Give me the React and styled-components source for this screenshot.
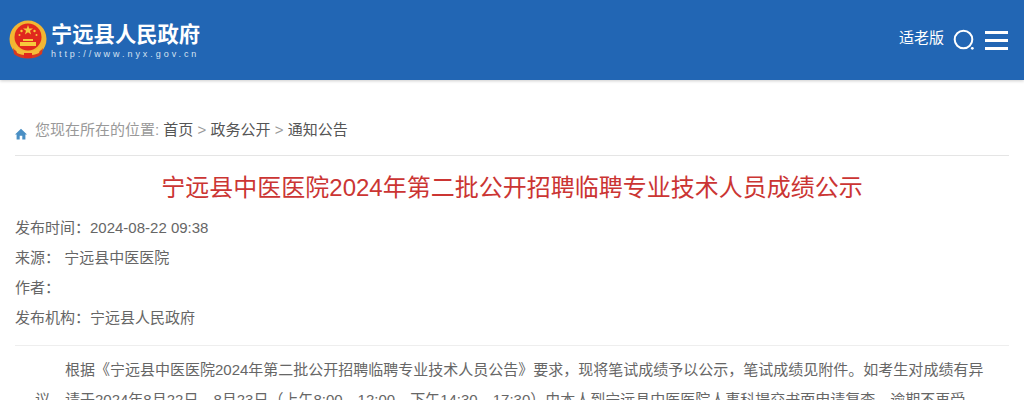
import React from 'react';
import styled, { createGlobalStyle } from 'styled-components';

const Global = createGlobalStyle`
html, body {
    margin: 0;
    padding: 0;
    background: #fff;
    overflow: hidden;
    font-family: "Liberation Sans", "Noto Sans CJK SC", sans-serif;
}
`;

const Page = styled.div`
width: 1024px;
height: 400px;
overflow: hidden;
`;

const Header = styled.header`
height: 80px;
background: #2266b4;
box-shadow: 0 1px 3px rgba(0, 0, 0, .2);
display: flex;
align-items: center;
justify-content: space-between;
padding: 0 16px 0 9px;
box-sizing: border-box;
`;

const Brand = styled.div`
display: flex;
align-items: center;
gap: 4px;
`;

const BrandText = styled.div`
color: #fff;
display: flex;
flex-direction: column;
margin-top: 2px;
`;

const BrandName = styled.div`
font-size: 21.3px;
line-height: 25px;
font-weight: 700;
white-space: nowrap;
`;

const BrandUrl = styled.div`
font-size: 9px;
line-height: 12px;
letter-spacing: 2.95px;
color: #d5e2f2;
white-space: nowrap;
`;

const Tools = styled.div`
display: flex;
align-items: center;
`;

const Elder = styled.span`
color: #fff;
font-size: 15px;
margin-right: 9px;
margin-top: -7px;
`;

const Burger = styled.div`
width: 23px;
height: 19px;
margin-left: 10px;
display: flex;
flex-direction: column;
justify-content: space-between;
span {
    display: block;
    height: 3px;
    background: #fff;
}
`;

const Main = styled.main`
padding: 0 15px;
`;

const Crumbs = styled.div`
height: 76px;
box-sizing: border-box;
padding-top: 40px;
border-bottom: 1px solid #e5e5e5;
display: flex;
align-items: flex-start;
font-size: 15px;
line-height: 20px;
color: #999;
white-space: nowrap;
svg {
    margin: 8px 8px 0 0;
}
a {
    color: #555;
    text-decoration: none;
}
i {
    font-style: normal;
    margin: 0 4.2px;
    color: #999;
}
`;

const Title = styled.h1`
margin: 0;
padding: 17px 0 10px;
font-size: 24px;
line-height: 30px;
font-weight: 400;
text-align: center;
color: #cb3533;
white-space: nowrap;
`;

const Meta = styled.div`
padding-bottom: 12px;
border-bottom: 1px solid #eee;
`;

const MetaRow = styled.div`
font-size: 15px;
line-height: 30px;
height: 30px;
color: #666;
white-space: nowrap;
`;

const Body = styled.div`
padding: 9px 20px 0 20px;
p {
    margin: 0;
    font-size: 15px;
    line-height: 30px;
    color: #666;
    text-indent: 30px;
}
`;

function Emblem() {
  return (
    <svg width="38" height="40" viewBox="0 0 38 40">
      <circle cx="19" cy="19" r="18.5" fill="#f2b632" />
      <circle cx="19" cy="17" r="13.5" fill="#e0281e" />
      <polygon points="19,5 20.2,8.6 24,8.6 21,10.8 22.1,14.4 19,12.2 15.9,14.4 17,10.8 14,8.6 17.8,8.6" fill="#f6c93c" />
      <circle cx="12.5" cy="11" r="1.2" fill="#f6c93c" />
      <circle cx="25.5" cy="11" r="1.2" fill="#f6c93c" />
      <circle cx="10.5" cy="15" r="1" fill="#f6c93c" />
      <circle cx="27.5" cy="15" r="1" fill="#f6c93c" />
      <rect x="14" y="19" width="10" height="2" fill="#f6c93c" />
      <rect x="11" y="22" width="16" height="4" fill="#f6c93c" />
      <path d="M4 28 C10 36 28 36 34 28 L33 34 C26 40 12 40 5 34 Z" fill="#d63a20" />
      <path d="M6 26 C11 33 27 33 32 26 L30 33 C24 36 14 36 8 33 Z" fill="#f4bd3a" />
      <rect x="15" y="33" width="8" height="5" fill="#e0281e" />
    </svg>
  );
}

function Search() {
  return (
    <svg width="22" height="22" viewBox="0 0 22 22">
      <circle cx="10.5" cy="10.5" r="8.8" fill="none" stroke="#fff" strokeWidth="2" />
      <circle cx="19.3" cy="19.3" r="1.4" fill="#fff" />
    </svg>
  );
}

function Home() {
  return (
    <svg width="12" height="12" viewBox="0 0 12 12">
      <path d="M6 .8 L12 6.4 H10.4 V11.4 H7.3 V7.8 H4.7 V11.4 H1.6 V6.4 H0 Z" fill="#4a8fc4" />
    </svg>
  );
}

export default function App() {
  return (
    <Page>
      <Global />
      <Header>
        <Brand>
          <Emblem />
          <BrandText>
            <BrandName>宁远县人民政府</BrandName>
            <BrandUrl>http://www.nyx.gov.cn</BrandUrl>
          </BrandText>
        </Brand>
        <Tools>
          <Elder>适老版</Elder>
          <Search />
          <Burger><span /><span /><span /></Burger>
        </Tools>
      </Header>
      <Main>
        <Crumbs>
          <Home />
          您现在所在的位置:&nbsp;<a>首页</a><i>&gt;</i><a>政务公开</a><i>&gt;</i><a>通知公告</a>
        </Crumbs>
        <Title>宁远县中医医院2024年第二批公开招聘临聘专业技术人员成绩公示</Title>
        <Meta>
          <MetaRow>发布时间：2024-08-22 09:38</MetaRow>
          <MetaRow>来源：&nbsp;宁远县中医医院</MetaRow>
          <MetaRow>作者：</MetaRow>
          <MetaRow>发布机构：宁远县人民政府</MetaRow>
        </Meta>
        <Body>
          <p>根据《宁远县中医医院2024年第二批公开招聘临聘专业技术人员公告》要求，现将笔试成绩予以公示，笔试成绩见附件。如考生对成绩有异议，请于2024年8月22日、8月23日（上午8:00—12:00，下午14:30—17:30）由本人到宁远县中医医院人事科提交书面申请复查，逾期不再受理。</p>
        </Body>
      </Main>
    </Page>
  );
}
